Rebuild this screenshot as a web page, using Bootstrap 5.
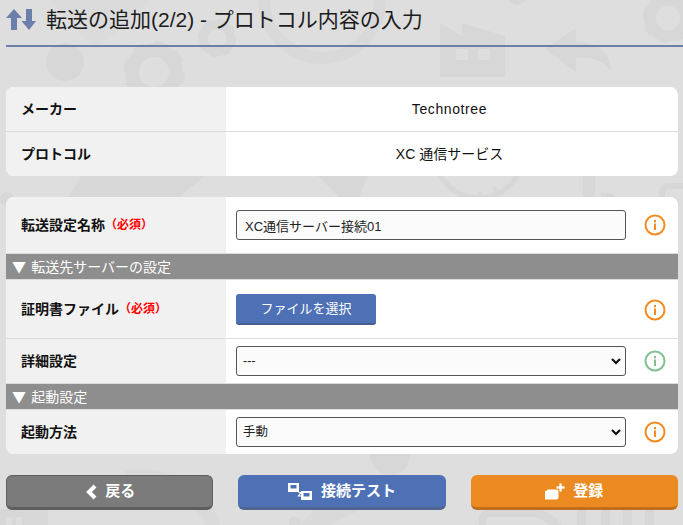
<!DOCTYPE html>
<html lang="ja">
<head>
    <meta charset="UTF-8">
    <meta name="viewport" content="width=device-width, initial-scale=1.0">
    <title>転送の追加</title>
    <link href="https://cdn.jsdelivr.net/npm/bootstrap@5.3.3/dist/css/bootstrap.min.css" rel="stylesheet">
    <style>
        html, body { height: 100%; }
        body {
            background-color: #dedede;
            font-family: "Liberation Sans", "Noto Sans CJK JP", sans-serif;
            color: #111;
            font-size: 14px;
            overflow: hidden;
        }
        .bg-art { position: absolute; left: 0; top: 0; width: 683px; height: 525px; }
        .page-wrap { position: relative; padding: 0 5px 0 6px; }
        .page-title {
            height: 47px;
            margin-right: -5px;
            border-bottom: 2px solid #6c7fab;
            gap: 10px;
            padding-bottom: 5px;
        }
        .page-title h1 { font-size: 21px; font-weight: 400; margin: 0; color: #1c1c1c; }
        .info-panel { background: #fff; border-radius: 8px; overflow: hidden; }
        .panel-top { margin-top: 40px; }
        .panel-form { margin-top: 21px; }
        .info-row { display: flex; border-bottom: 1px solid #dcdcdc; }
        .info-row:last-child { border-bottom: 0; }
        .info-label {
            width: 220px;
            flex: none;
            background: #f1f1f1;
            padding-left: 15px;
            font-weight: 700;
            display: flex;
            align-items: center;
        }
        .info-value { flex: 1; display: flex; align-items: center; min-width: 0; }
        .plain-value { padding-right: 5px; }
        .maker-name { letter-spacing: .6px; }
        .row-h44 { height: 44px; }
        .row-h45 { height: 45px; }
        .row-h56 { height: 56px; }
        .row-h59 { height: 59px; }
        .req-mark { color: #f00; font-size: 12px; }
        .section-bar {
            background: #8e8e8e;
            color: #fff;
            height: 27px;
            line-height: 25px;
            padding-left: 6px;
            border-top: 1px solid #dcdcdc;
            border-bottom: 1px solid #dcdcdc;
            word-spacing: 2px;
            font-family: "Noto Sans CJK JP", sans-serif;
        }
        .field-box { width: 390px; margin-left: 10px; flex: none; }
        .field-box.form-control, .field-box.form-select {
            height: 30px;
            padding-top: 0;
            padding-bottom: 0;
            padding-left: 8px;
            background-color: #fbfbfb;
            border: 1px solid #555;
            border-radius: 3px;
            color: #222;
            font-size: 13px;
        }
        .field-box.form-select {
            font-size: 12.500px;
            padding-left: 6px;
            background-image: url("data:image/svg+xml,%3csvg xmlns='http://www.w3.org/2000/svg' viewBox='0 0 10 7'%3e%3cpath fill='none' stroke='%23111' stroke-width='2.200' d='M1 1l4 4 4-4'/%3e%3c/svg%3e");
            background-position: right 4px center;
            background-size: 10px 7px;
        }
        .file-row { padding-top: 1px; }
        .file-btn {
            width: 140px;
            height: 31px;
            padding: 0;
            background: #4e71b5;
            border: 0;
            border-bottom: 2px solid #465f91;
            border-radius: 3px;
            color: #fff;
            font-size: 13px;
        }
        .help-icon { width: 22px; height: 22px; margin-left: 18px; flex: none; }
        .action-row {
            margin-top: 21px;
            display: grid;
            grid-template-columns: repeat(3, 1fr);
            gap: 25px;
        }
        .action-btn {
            height: 35px;
            padding: 0;
            border: 0;
            border-radius: 6px;
            color: #fff;
            font-size: 15px;
            font-weight: 700;
            display: flex;
            align-items: center;
            justify-content: center;
        }
        .btn-back { background: #7b7b7b; border: 1px solid #5e5e5e; border-bottom-width: 3px; gap: 7px; }
        .btn-test { background: #4e71b5; border-bottom: 3px solid #4f648f; gap: 9px; }
        .btn-save { background: #ea8a20; border-bottom: 3px solid #bf6f1d; gap: 6px; }
    </style>
</head>
<body>
    <svg class="bg-art" viewBox="0 0 683 525" fill="#d7d7d7" aria-hidden="true">
        <defs>
            <g id="gear">
                <circle r="22" fill="none" stroke="#d7d7d7" stroke-width="14"/>
                <circle r="27" fill="none" stroke="#d7d7d7" stroke-width="8" stroke-dasharray="11 10.200"/>
            </g>
        </defs>
        <path d="M50 0 L96 50 L150 0Z" opacity=".5"/>
        <circle cx="322" cy="0" r="58" fill="none" stroke="#d7d7d7" stroke-width="12" opacity=".7"/>
        <circle cx="65" cy="62" r="19"/>
        <use href="#gear" transform="translate(154 72)"/>
        <use href="#gear" transform="translate(217 38) scale(.62)"/>
        <path d="M440 23 L462 36 V23 L505 36 V77 H440Z"/>
        <path d="M456 49h12v11h-12zM478 49h12v11h-12z" fill="#dedede"/>
        <path d="M576 28 V42 C600 42 612 55 610 71 C603 60 592 57 576 58 V72 L545 49Z"/>
        <use href="#gear" transform="translate(668 18) scale(.82)"/>
        <circle cx="517" cy="-5" r="10"/>
        <!-- between the two panels -->
        <path d="M85 170H212L175 200H66Z"/>
        <path d="M312 170H370L358 200H342Z"/>
        <circle cx="479" cy="154" r="44" fill="none" stroke="#d7d7d7" stroke-width="5"/>
        <path d="M460 192l-3 8 3 1 3-8zM478 192h4v9h-4zM493 187l3 8 3-1-3-8z"/>
        <path d="M583 170h12v33h-12zM601 193h8c5 0 8 4 8 9h-16z"/>
        <path d="M659 200v-8c0-5 4-9 9-9h15v6h-14c-2 0-4 2-4 4v7z"/>
        <circle cx="7" cy="199" r="7"/>
        <!-- below the form -->
        <path d="M0 509h48v16H0z"/>
        <path d="M6 517h6v8H6zM16 517h6v8h-6z" fill="#dedede"/>
        <path d="M125 471c45-8 85 18 95 54h-14c-12-22-45-38-81-40z" opacity=".6"/>
        <circle cx="390" cy="455" r="20"/>
        <path d="M318 505 L361 509 L330 525H300Z" opacity=".7"/>
        <circle cx="295" cy="522" r="6"/>
        <path d="M479 525v-6c0-6 5-10 11-10h42c13 0 24 7 30 16h-14c-5-6-10-8-16-8h-42c-3 0-4 2-4 4v4z"/>
        <path d="M577 510h9v15h-9zM601 510h9v15h-9zM623 510h9v15h-9zM645 510h9v15h-9z"/>
    </svg>
    <div class="page-wrap">
        <div class="page-title d-flex align-items-center">
            <svg width="30" height="26" viewBox="0 0 30 26" fill="#6c7fab" aria-hidden="true">
                <path d="M8 2 L16 11 H11 V23 H5 V11 H0Z"/>
                <path d="M20 2 H26 V14 H30 L23 23 L15.500 14 H20Z"/>
            </svg>
            <h1>転送の追加(2/2) - プロトコル内容の入力</h1>
        </div>

        <div class="info-panel panel-top">
            <div class="info-row row-h45">
                <div class="info-label">メーカー</div>
                <div class="info-value plain-value justify-content-center"><span class="maker-name">Technotree</span></div>
            </div>
            <div class="info-row row-h44">
                <div class="info-label">プロトコル</div>
                <div class="info-value plain-value justify-content-center">XC 通信サービス</div>
            </div>
        </div>

        <div class="info-panel panel-form">
            <div class="info-row row-h56 border-0">
                <div class="info-label">転送設定名称<span class="req-mark">（必須）</span></div>
                <div class="info-value">
                    <input type="text" class="form-control field-box" value="XC通信サーバー接続01">
                    <svg class="help-icon" viewBox="0 0 22 22" aria-hidden="true"><circle cx="11" cy="11" r="9.500" fill="none" stroke="#f58a1f" stroke-width="2"/><path d="M11 9.500v6.500M11 6v2.200" stroke="#f58a1f" stroke-width="2"/></svg>
                </div>
            </div>
            <div class="section-bar">▼ 転送先サーバーの設定</div>
            <div class="info-row row-h59">
                <div class="info-label">証明書ファイル<span class="req-mark">（必須）</span></div>
                <div class="info-value file-row">
                    <div class="field-box"><button type="button" class="btn file-btn">ファイルを選択</button></div>
                    <svg class="help-icon" viewBox="0 0 22 22" aria-hidden="true"><circle cx="11" cy="11" r="9.500" fill="none" stroke="#f58a1f" stroke-width="2"/><path d="M11 9.500v6.500M11 6v2.200" stroke="#f58a1f" stroke-width="2"/></svg>
                </div>
            </div>
            <div class="info-row row-h44 border-0">
                <div class="info-label">詳細設定</div>
                <div class="info-value">
                    <select class="form-select field-box"><option>---</option></select>
                    <svg class="help-icon" viewBox="0 0 22 22" aria-hidden="true"><circle cx="11" cy="11" r="9.500" fill="none" stroke="#7fc08f" stroke-width="2"/><path d="M11 9.500v6.500M11 6v2.200" stroke="#7fc08f" stroke-width="2"/></svg>
                </div>
            </div>
            <div class="section-bar">▼ 起動設定</div>
            <div class="info-row row-h44">
                <div class="info-label">起動方法</div>
                <div class="info-value">
                    <select class="form-select field-box"><option>手動</option></select>
                    <svg class="help-icon" viewBox="0 0 22 22" aria-hidden="true"><circle cx="11" cy="11" r="9.500" fill="none" stroke="#f58a1f" stroke-width="2"/><path d="M11 9.500v6.500M11 6v2.200" stroke="#f58a1f" stroke-width="2"/></svg>
                </div>
            </div>
        </div>

        <div class="action-row">
            <button type="button" class="btn action-btn btn-back">
                <svg width="14" height="16" viewBox="0 0 14 16" aria-hidden="true"><path d="M11 2 L5 8 L11 14" fill="none" stroke="#fff" stroke-width="4"/></svg>
                戻る
            </button>
            <button type="button" class="btn action-btn btn-test">
                <svg width="24" height="17" viewBox="0 0 24 17" aria-hidden="true"><path fill="#fff" fill-rule="evenodd" d="M0 0h11v9H0zM2.500 2v3.500h6V2zM13 8h11v9H13zM15.500 10v3.500h6V10z"/><path d="M10.500 9.500h2.500l-2.500 3.500h2.500" fill="none" stroke="#fff" stroke-width="1.200"/></svg>
                接続テスト
            </button>
            <button type="button" class="btn action-btn btn-save">
                <svg width="22" height="17" viewBox="0 0 22 17" fill="#fff" aria-hidden="true"><path d="M0 8.500 L3 6.500 H13.500 V15 L12 16.500 H0Z"/><path d="M14 0h3v3h3v3h-3v3h-3V6h-3V3h3z" stroke="#ea8a20" stroke-width=".8"/></svg>
                登録
            </button>
        </div>
    </div>
</body>
</html>
